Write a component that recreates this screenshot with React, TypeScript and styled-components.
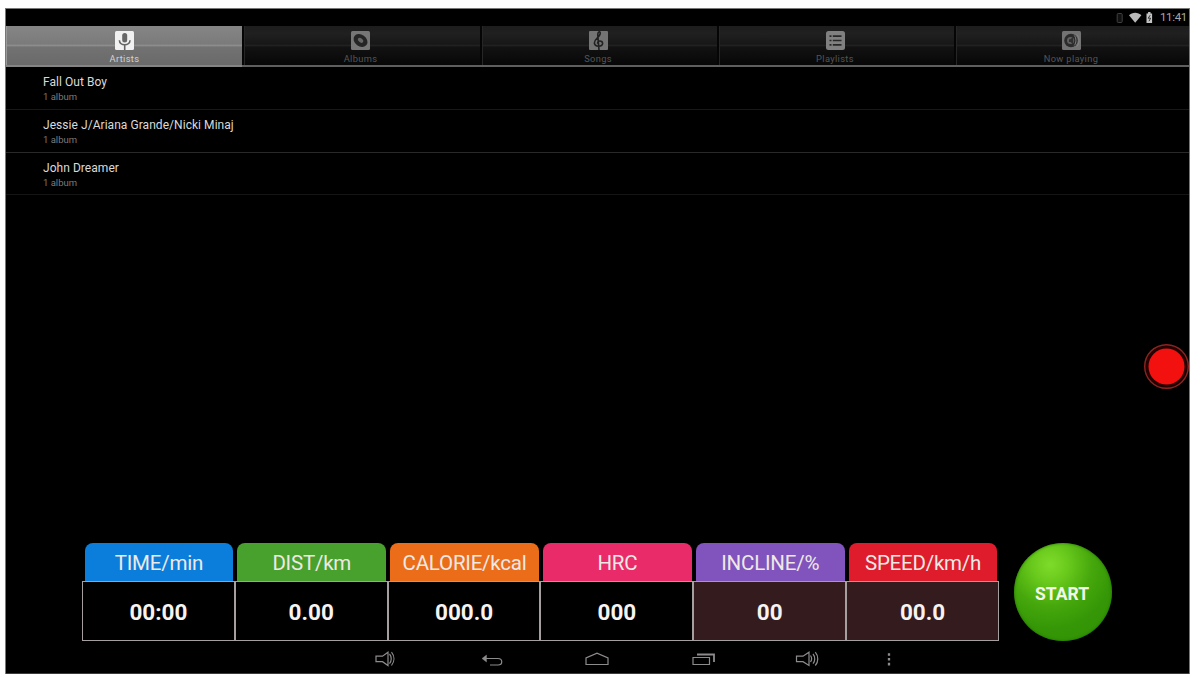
import React from "react";
import styled, { createGlobalStyle } from "styled-components";

const GlobalStyle = createGlobalStyle`
  * { box-sizing: border-box; }
  body { margin: 0; background: #fefefe; font-family: Roboto, "Liberation Sans", sans-serif; }
`;

const Page = styled.div`
  width: 1190px;
  height: 674px;
  padding: 9px 1px 0 6px;
  background: #fefefe;
  overflow: hidden;
`;

const Screen = styled.main`
  position: relative;
  display: flex;
  flex-direction: column;
  height: 665px;
  background: #000;
  box-shadow: 0 0 0 1px #777;
  border-bottom: 1px solid #3c3c3c;
`;

const StatusBar = styled.header`
  display: flex;
  align-items: center;
  justify-content: flex-end;
  height: 17px;
  padding-right: 3px;
  color: #a9a9a9;
  font-size: 11.5px;
  line-height: 17px;
`;

const StatusIcons = styled.svg`
  width: 38px;
  height: 12px;
  margin-right: 7px;
`;

const Clock = styled.span`
  width: 26px;
  letter-spacing: -0.35px;
  white-space: nowrap;
`;

const TabBar = styled.nav`
  display: grid;
  grid-template-columns: 236px 238px 237px 237px 235px;
  height: 41px;
  border-bottom: 2px solid #5f5f5f;
`;

const Tab = styled.div<{ $active?: boolean }>`
  display: flex;
  flex-direction: column;
  align-items: center;
  gap: 3px;
  padding-top: 5px;
  padding-right: ${(p) => (p.$active ? 0 : 3)}px;
  color: ${(p) => (p.$active ? "#d2d2d2" : "#555")};
  border-left: ${(p) => (p.$active ? "1px solid #999" : "2px solid #050505")};
  box-shadow: ${(p) => (p.$active ? "0 2px 0 #858585" : "inset 1px 0 0 #262626")};
  background: ${(p) =>
    p.$active
      ? "linear-gradient(#858585 0, #7b7b7b 46%, #8d8d8d 50%, #727272 54%, #6a6a6a 100%)"
      : "linear-gradient(#1c1c1c 0, #202020 20%, #171717 46%, #212121 50%, #121212 54%, #070707 100%)"};
`;

const TabIcon = styled.svg`
  width: 19px;
  height: 19px;
  flex: none;
`;

const TabLabel = styled.span`
  font-size: 9.3px;
  line-height: 11px;
  letter-spacing: 0.35px;
`;

const ArtistList = styled.ul`
  flex: 1;
  margin: 0;
  padding: 0;
  list-style: none;
`;

const ArtistRow = styled.li<{ $height: number; $line: string }>`
  display: flex;
  flex-direction: column;
  height: ${(p) => p.$height}px;
  padding: 8px 0 0 37px;
  border-bottom: 1px solid ${(p) => p.$line};
`;

const ArtistName = styled.span`
  color: #dadada;
  font-size: 12px;
  line-height: 15px;
  letter-spacing: 0.05px;
`;

const AlbumCount = styled.span`
  color: #7c7c7c;
  font-size: 9.5px;
  line-height: 14px;
`;

const Dashboard = styled.section`
  display: flex;
  align-items: flex-start;
  gap: 15px;
  height: 99px;
  padding-left: 76px;
`;

const Metrics = styled.div`
  display: grid;
  grid-template-columns: repeat(6, 1fr);
  width: 917px;
`;

const Metric = styled.div`
  display: flex;
  flex-direction: column;
`;

const MetricHead = styled.div<{ $color: string }>`
  height: 38px;
  margin: 0 1.5px 0 2.5px;
  border-radius: 8px 8px 0 0;
  background: ${(p) => p.$color};
  color: #eee9e5;
  font-size: 20.5px;
  line-height: 40px;
  letter-spacing: -0.22px;
  text-align: center;
  white-space: nowrap;
`;

const MetricValue = styled.div<{ $tinted?: boolean }>`
  height: 60px;
  border: 1px solid #a5a09f;
  background: ${(p) => (p.$tinted ? "#331b1e" : "#000")};
  color: #f7f3f2;
  font-size: 22.5px;
  font-weight: 700;
  line-height: 60px;
  text-align: center;
`;

const StartButton = styled.button`
  width: 98px;
  height: 98px;
  padding: 3px 2px 0 0;
  border: 0;
  border-radius: 50%;
  background: radial-gradient(circle at 37% 22%, #7edb2a 0, #6bcb1d 17%, #46a80c 42%, #359706 65%, #2f9205 100%);
  box-shadow: inset 0 0 3px #1f6d05;
  color: #f1f8e9;
  font: 700 17.5px/20px Roboto, "Liberation Sans", sans-serif;
`;

const NavBar = styled.footer`
  display: flex;
  align-items: center;
  height: 31px;
  padding: 3px 0 0 367px;
`;

const NavIcon = styled.svg<{ $gap: number }>`
  width: 26px;
  height: 20px;
  margin-right: ${(p) => p.$gap}px;
  flex: none;
  fill: none;
  stroke: #8c8c8c;
  stroke-width: 1.2;
`;

const RecordButton = styled.div`
  position: absolute;
  top: 335px;
  right: 0;
  width: 45px;
  height: 46px;
  overflow: hidden;
`;

const tabs = [
  {
    label: "Artists",
    icon: (
      <>
        <rect width="19" height="19" rx="1.5" fill="#f1f1f1" />
        <rect x="7.2" y="2" width="5" height="9.5" rx="2.5" fill="#686868" />
        <path d="M4.4 9.2c0 6 10.6 6 10.6 0M9.7 13.8V19" fill="none" stroke="#656565" strokeWidth="1.6" />
      </>
    ),
  },
  {
    label: "Albums",
    icon: (
      <>
        <rect width="19" height="19" rx="1.5" fill="#777" />
        <ellipse cx="9.5" cy="9.5" rx="7.5" ry="5.8" transform="rotate(35 9.5 9.5)" fill="#252525" />
        <ellipse cx="9.6" cy="9.3" rx="3" ry="2" transform="rotate(40 9.6 9.3)" fill="#666" />
      </>
    ),
  },
  {
    label: "Songs",
    icon: (
      <>
        <rect width="19" height="19" rx="1" fill="#747474" />
        <path
          d="M10 19 8.8 4.2C8.5.7 11.4-.7 11.2 2.6 11 6.1 5 8 5.4 12.2c.4 4 8.4 4 8.2.2-.2-3.5-5.7-3-4.9.2"
          fill="none"
          stroke="#202020"
          strokeWidth="1.6"
        />
      </>
    ),
  },
  {
    label: "Playlists",
    icon: (
      <>
        <rect width="19" height="19" rx="2.5" fill="#808080" />
        <path d="M3.5 5.2h2M6.8 5.2h8.7M3.5 9.5h2M6.8 9.5h8.7M3.5 13.8h2M6.8 13.8h8.7" stroke="#272727" strokeWidth="1.7" />
      </>
    ),
  },
  {
    label: "Now playing",
    icon: (
      <>
        <rect width="19" height="19" rx="1.5" fill="#737373" />
        <circle cx="9" cy="9.5" r="6.8" fill="#2b2b2b" />
        <circle cx="8.6" cy="9.5" r="3.6" fill="#606060" />
        <path d="M7 8.2h1.6l2.6-2.7v8L8.6 11H7z" fill="#303030" />
        <path d="M12.3 4.5c2.2 2.6 2.2 7.3 0 9.9M14.8 3.5c3 3.5 3 8.5 0 12" fill="none" stroke="#858585" />
      </>
    ),
  },
];

const artists = [
  { name: "Fall Out Boy", height: 43, line: "#181818" },
  { name: "Jessie J/Ariana Grande/Nicki Minaj", height: 43, line: "#292929" },
  { name: "John Dreamer", height: 42, line: "#151515" },
];

const metrics = [
  { label: "TIME/min", value: "00:00", color: "#0b7edc" },
  { label: "DIST/km", value: "0.00", color: "#48a12d" },
  { label: "CALORIE/kcal", value: "000.0", color: "#eb6d19" },
  { label: "HRC", value: "000", color: "#e92c69" },
  { label: "INCLINE/%", value: "00", color: "#8053bd", tinted: true },
  { label: "SPEED/km/h", value: "00.0", color: "#df1c2b", tinted: true },
];

const navIcons = [
  { gap: 80, drawing: <><path d="M3 7.2h6.5L15 3.2v13.3l-5.5-3.8H3z" /><path d="M16.5 5c2.3 2.4 2.3 7.3 0 9.7M18.5 3.2c3.2 4 3.2 9.3 0 13.3" /></> },
  { gap: 79, drawing: <><path d="M4 9.5h15c5 0 5 6.5 0 6.5h-8" /><path d="M7.5 6 3 9.5 7.5 13z" fill="#8c8c8c" strokeWidth=".4" /></> },
  { gap: 81, drawing: <path d="M2 15.5h22V9L13 4.2 2 9z" /> },
  { gap: 77, drawing: <><path d="M2 8.5h16.5v7H2z" /><path d="M6 5.5h17V13" strokeWidth="1.8" /></> },
  { gap: 56, drawing: <><path d="M2.5 7.2H9l6-4v13.3l-6-3.8H2.5z" /><path d="M16.5 6.5c1.4 2 1.4 4.5 0 6.5M19 5c2.3 2.8 2.3 7 0 9.6M21.3 3.2c3.3 4 3.3 9.5 0 13.3" /></> },
  { gap: 0, drawing: <path d="M13 4.2v2.6M13 9v2.6M13 13.8v2.6" strokeWidth="2.3" /> },
];

export default function App() {
  return (
    <Page>
      <GlobalStyle />
      <Screen>
        <StatusBar>
          <StatusIcons viewBox="0 0 38 12">
            <rect x="2.2" y="1.5" width="5" height="9" rx="1" fill="#111" stroke="#414141" />
            <path d="M14 3.3C17-.1 23.3-.1 26.4 3.3L20.2 10.8z" fill="#b9b9b9" />
            <path d="M31.5 1.5h1.6V0h2.4v1.5h1.6V11h-5.6z" fill="#c4c4c4" />
            <path d="m35.2 3.2-2 3h2.4l-1.6 3" fill="none" stroke="#333" />
          </StatusIcons>
          <Clock>11:41</Clock>
        </StatusBar>
        <TabBar>
          {tabs.map((tab, i) => (
            <Tab key={tab.label} $active={i === 0}>
              <TabIcon viewBox="0 0 19 19">{tab.icon}</TabIcon>
              <TabLabel>{tab.label}</TabLabel>
            </Tab>
          ))}
        </TabBar>
        <ArtistList>
          {artists.map((artist) => (
            <ArtistRow key={artist.name} $height={artist.height} $line={artist.line}>
              <ArtistName>{artist.name}</ArtistName>
              <AlbumCount>1 album</AlbumCount>
            </ArtistRow>
          ))}
        </ArtistList>
        <Dashboard>
          <Metrics>
            {metrics.map((metric) => (
              <Metric key={metric.label}>
                <MetricHead $color={metric.color}>{metric.label}</MetricHead>
                <MetricValue $tinted={metric.tinted}>{metric.value}</MetricValue>
              </Metric>
            ))}
          </Metrics>
          <StartButton>START</StartButton>
        </Dashboard>
        <NavBar>
          {navIcons.map((icon, i) => (
            <NavIcon key={i} viewBox="0 0 26 20" $gap={icon.gap}>
              {icon.drawing}
            </NavIcon>
          ))}
        </NavBar>
        <RecordButton>
          <svg width="45" height="46" viewBox="0 0 45 46">
            <circle cx="22.5" cy="22.5" r="21.8" fill="#250000" stroke="#8b2522" strokeWidth="1.4" />
            <circle cx="22.5" cy="22.5" r="18" fill="#f31110" />
          </svg>
        </RecordButton>
      </Screen>
    </Page>
  );
}
